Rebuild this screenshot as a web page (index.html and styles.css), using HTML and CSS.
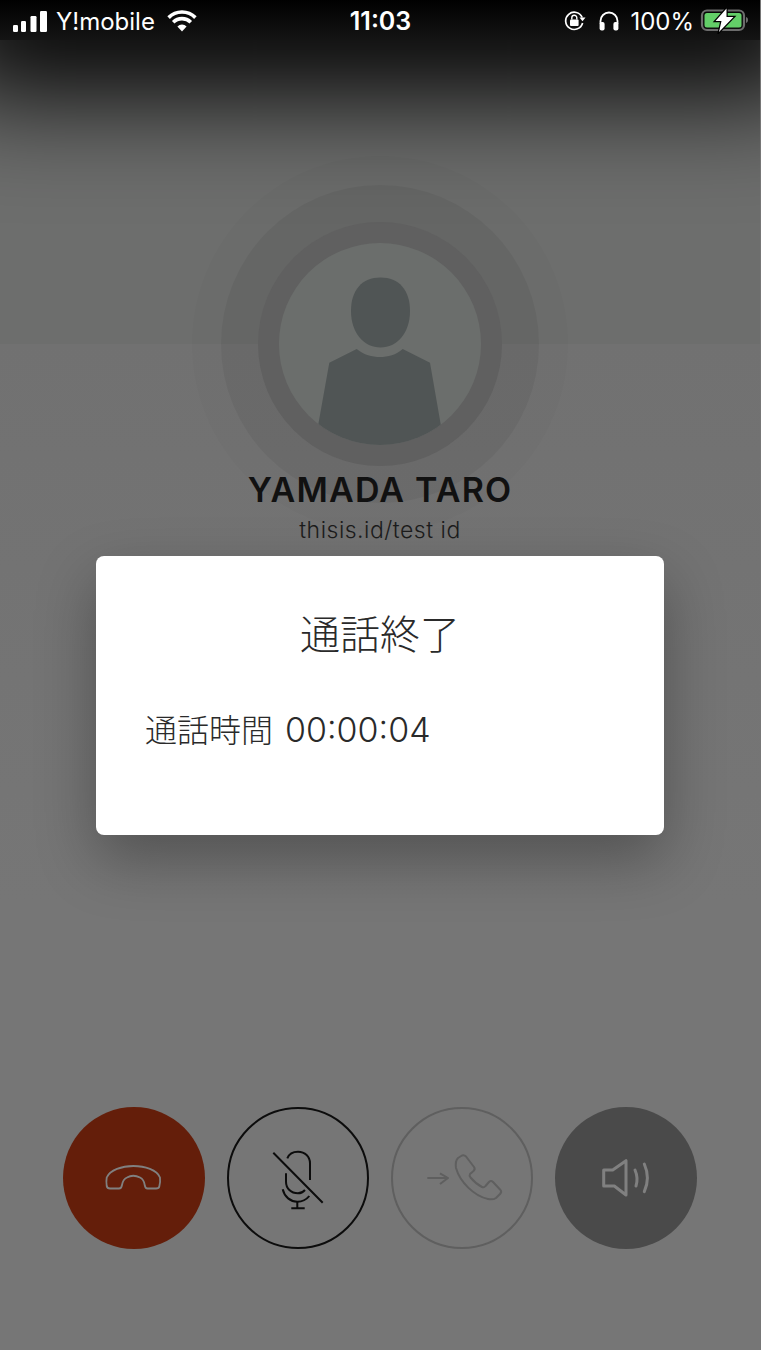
FILE: index.html
```html
<!DOCTYPE html>
<html lang="ja">
<head>
    <meta charset="UTF-8">
    <meta name="viewport" content="width=device-width, initial-scale=1.0">
    <title>通話終了</title>
    <link rel="stylesheet" href="styles.css">
</head>
<body>
    <div class="screen">
        <div class="status-bar">
            <div class="status-left">
                <svg class="signal" width="34" height="21" viewBox="0 0 34 21" fill="#fff">
                    <rect x="0" y="14" width="5" height="7" rx="1.2"/>
                    <rect x="8" y="10" width="5" height="11" rx="1.2"/>
                    <rect x="17.5" y="5" width="6" height="16" rx="1.2"/>
                    <rect x="27" y="0" width="7" height="21" rx="1.2"/>
                </svg>
                <span class="carrier">Y!mobile</span>
                <svg class="wifi" width="30" height="22" viewBox="0 0 30 22" fill="none" stroke="#fff" stroke-width="3.6">
                    <path d="M1.6 7.6A19 19 0 0 1 28.4 7.6"/>
                    <path d="M6.2 12.2A12.5 12.5 0 0 1 23.8 12.2"/>
                    <path d="M15 21.5L10.4 16.4A6.5 6.5 0 0 1 19.6 16.4Z" fill="#fff" stroke="none"/>
                </svg>
            </div>
            <span class="clock">11:03</span>
            <div class="status-right">
                <svg width="22" height="20" viewBox="0 0 22 20" fill="none">
                    <path d="M18.2 6.5A8.6 8.6 0 1 0 18.6 12" stroke="#fff" stroke-width="1.7"/>
                    <path d="M15.5 6.5h6l-3 3.8z" fill="#fff"/>
                    <rect x="6" y="8.5" width="8.6" height="6.5" rx="1" fill="#fff"/>
                    <path d="M7.8 8.5V6.8a2.5 2.5 0 0 1 5 0v1.7" stroke="#fff" stroke-width="1.4"/>
                </svg>
                <svg class="headphones" width="20" height="20" viewBox="0 0 20 20" fill="none">
                    <path d="M1.5 13V10a8.5 8.5 0 0 1 17 0v3" stroke="#fff" stroke-width="1.8"/>
                    <rect x="0.6" y="11" width="5" height="8.6" rx="2" fill="#fff"/>
                    <rect x="14.4" y="11" width="5" height="8.6" rx="2" fill="#fff"/>
                </svg>
                <span class="percent">100%</span>
                <svg class="battery" width="48" height="26" viewBox="0 0 48 26" fill="none">
                    <rect x="2" y="2.500" width="42" height="19.500" rx="5" stroke="#6c6c6c" stroke-width="2.200"/>
                    <rect x="4.500" y="5" width="37" height="14.500" rx="2.500" fill="#63cf68"/>
                    <path d="M46 9c1.500.4 2 1.600 2 3s-.5 2.600-2 3z" fill="#6c6c6c"/>
                    <path class="bolt" d="M26.500 0.500L15.500 13H21.500L19 24L33.500 9H26.500Z"/>
                </svg>
            </div>
        </div>

        <div class="profile">
            <div class="avatar">
                <svg width="202" height="202" viewBox="0 0 202 202" fill="#505555">
                    <path d="M101.500 34.500C120 34.500 131 47 131 68C131 90 118 104.500 101.500 104.500C85 104.500 72 90 72 68C72 47 83 34.500 101.500 34.500Z"/>
                    <path d="M77.700 106C85 112 93 114 101 114C109 114 117 112 123.700 106L151 119.700L162 183V202H39V183L50.300 119.700Z"/>
                </svg>
            </div>
            <div class="name">YAMADA TARO</div>
            <div class="user-id">thisis.id/test id</div>
        </div>

        <div class="controls">
            <button class="call-btn hangup">
                <svg width="64" height="64" viewBox="0 0 64 64" fill="none" stroke="#808080" stroke-width="1.800" stroke-linejoin="round">
                    <path d="M4.700 31.500C8 24 20 20 31.300 20C43 20 55 24 58 31.500C58.400 35 58 38 57.300 40.500C57 42 55.500 42.500 54 42.500H45.500C43.500 42.500 43 41 42.700 39C42.300 36 41 33 38 31.500C34 29.500 28.500 29.500 25 31.500C21.800 33 20.500 36 20 39C19.700 41 19 42.500 17 42.500H8C6 42.500 5 41.500 4.700 40C4.300 37 4.300 34 4.700 31.500Z"/>
                </svg>
            </button>
            <button class="call-btn mute">
                <svg width="64" height="64" viewBox="0 0 64 64" fill="none" stroke="#0c0c0c" stroke-width="2">
                    <path d="M21.300 12.300C23 8 27 5.700 32 5.700C39 5.700 44 10.500 44 17.300V34"/>
                    <path d="M20 27.300V35.700C20 42.500 25 47.300 32 47.300C35 47.300 37.300 46 39 44"/>
                    <path d="M16.700 43.300C18.500 51 24.500 55.700 31.300 55.700C36 55.700 40.500 53.500 43.300 50"/>
                    <path d="M31.300 55.700V62.300M25.300 62.300H38.700M7.300 6.700L56.700 56.700"/>
                </svg>
            </button>
            <button class="call-btn transfer">
                <svg width="84" height="64" viewBox="-2 0 84 64" fill="none" stroke="#5f5f5f" stroke-width="2" stroke-linejoin="round">
                    <path d="M5.300 32H26M18 27.300L26 32L18 38"/>
                    <path d="M36 12L40 9.500Q42 8.500 44 10.500L52 21Q53.500 23 51.500 25L48 28Q47 29.500 48.500 31.500Q54 38 60 41Q62 42 63.500 40L67 36Q69 34 71 36L78.500 44Q80 46 78 48L74 52Q71 54 66 53C52 50 38 36 34 22Q33 15 36 12Z"/>
                </svg>
            </button>
            <button class="call-btn speaker">
                <svg width="64" height="64" viewBox="-1 0 64 64" fill="none" stroke="#808080" stroke-width="3" stroke-linecap="round" stroke-linejoin="round">
                    <path d="M8.700 24H17.700L31 14.700V49L19.300 40H8.700Z"/>
                    <path d="M40 24Q43.500 32 41 40"/>
                    <path d="M49.300 18Q55.500 32 49.300 45.700"/>
                </svg>
            </button>
        </div>

        <div class="overlay">
            <div class="dialog">
                <div class="dialog-title">通話終了</div>
                <div class="dialog-body">通話時間 <span class="duration">00:00:04</span></div>
            </div>
        </div>
    </div>
</body>
</html>
```

FILE: styles.css
```css
* {
    box-sizing: border-box;
}
html {
    background-color: #767676;
}
body {
    margin: 0;
    font-family: Inter, "Noto Sans CJK JP", sans-serif;
}
.screen {
    position: relative;
    display: flex;
    flex-direction: column;
    width: 760px;
    height: 1350px;
    overflow: hidden;
    background: linear-gradient(#6d6e6d 344px, #717171 344px, #767676 900px);
}

/* status bar */
.status-bar {
    position: relative;
    display: flex;
    justify-content: space-between;
    align-items: center;
    flex-shrink: 0;
    height: 40px;
    padding: 2px 12px 0 13px;
    background: linear-gradient(#000, #141414);
    color: #fff;
    font-size: 24px;
    box-shadow: 0 -2px 110px 55px #000;
}
.status-left,
.status-right {
    display: flex;
    align-items: center;
    width: 250px;
}
.status-right {
    justify-content: flex-end;
}
.signal {
    margin-right: 9px;
}
.carrier {
    margin-right: 12px;
}
.clock {
    font-size: 25px;
    font-weight: 600;
}
.headphones {
    margin-left: 13px;
}
.percent {
    margin: 0 6px 0 11px;
}
.bolt {
    fill: #fff;
    stroke: #000;
    stroke-width: 2.5px;
    paint-order: stroke;
}

/* profile */
.profile {
    display: flex;
    flex-direction: column;
    align-items: center;
    padding-top: 203px;
}
.avatar {
    width: 202px;
    height: 202px;
    border-radius: 50%;
    overflow: hidden;
    background-color: #6b6e6c;
    box-shadow:
        0 0 0 21px #606060,
        0 0 0 58px rgba(0, 0, 0, 0.05),
        0 0 0 87px rgba(0, 0, 0, 0.015);
}
.name {
    position: relative;
    margin-top: 24px;
    font-size: 34px;
    font-weight: 600;
    letter-spacing: 1.2px;
    line-height: 42px;
    color: #111;
}
.user-id {
    position: relative;
    margin-top: 4px;
    font-size: 23px;
    font-weight: 300;
    letter-spacing: 0.5px;
    line-height: 30px;
    color: #1c1c1c;
}

/* call buttons */
.controls {
    display: flex;
    justify-content: center;
    gap: 22px;
    margin-top: auto;
    padding-bottom: 101px;
}
.call-btn {
    display: flex;
    justify-content: center;
    align-items: center;
    width: 142px;
    height: 142px;
    padding: 0;
    border: 2px solid transparent;
    border-radius: 50%;
    background: none;
}
.hangup {
    background-color: #641e0a;
}
.mute {
    border-color: #0c0c0c;
}
.transfer {
    border-color: #5f5f5f;
}
.speaker {
    background-color: #4a4a4a;
}

/* dialog */
.overlay {
    position: absolute;
    top: 556px;
    left: 96px;
}
.dialog {
    width: 568px;
    height: 279px;
    padding: 52px 49px 0;
    border-radius: 8px;
    background-color: #fff;
    box-shadow: 0 24px 60px rgba(0, 0, 0, 0.3);
    color: #2a2a2a;
}
.dialog-title {
    font-size: 40px;
    font-weight: 300;
    line-height: 54px;
    text-align: center;
}
.dialog-body {
    margin-top: 48px;
    font-size: 32px;
    font-weight: 300;
    line-height: 40px;
}
.duration {
    margin-left: 3px;
    font-size: 34px;
}
```
